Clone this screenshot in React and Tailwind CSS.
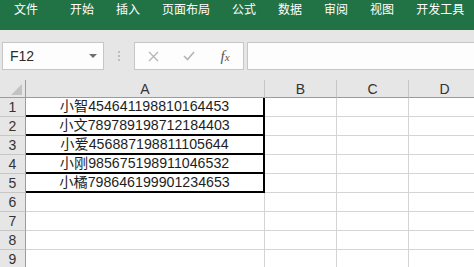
export default function App() {
  const tabs = ["开始", "插入", "页面布局", "公式", "数据", "审阅", "视图", "开发工具"];
  const data = [
    "小智454641198810164453",
    "小文789789198712184403",
    "小爱456887198811105644",
    "小刚985675198911046532",
    "小橘798646199901234653",
  ];
  const rows = [1, 2, 3, 4, 5, 6, 7, 8, 9];
  const cols = ["B", "C", "D"];
  return (
    <div className="w-[474px] h-[267px] overflow-hidden bg-white font-['Liberation_Sans','Noto_Sans_CJK_SC',sans-serif]">
      {/* Ribbon tabs */}
      <div className="h-[30px] bg-[#217346] flex items-start pt-[2px] pl-[14px] gap-[22px] text-white text-[12px] leading-[17px] whitespace-nowrap">
        <span className="mr-[10px]">文件</span>
        {tabs.map((t) => (
          <span key={t}>{t}</span>
        ))}
      </div>

      {/* Formula bar */}
      <div className="h-[50px] bg-[#e6e6e6] flex items-start pt-[12px] pl-[2px]">
        <div className="w-[102px] h-[28px] shrink-0 bg-[#fdfdfd] border border-[#c6c6c6] flex items-center justify-between pl-[7px] pr-[6px]">
          <span className="text-[14px] text-[#2b2b2b]">F12</span>
          <svg width="8" height="5" viewBox="0 0 8 5">
            <polygon points="0,0 8,0 4,4" fill="#6e6e6e" />
          </svg>
        </div>
        <div className="ml-[14px] shrink-0 h-[28px] flex flex-col justify-center gap-[2px]">
          <div className="w-[2px] h-[2px] bg-[#bdbdbd]" />
          <div className="w-[2px] h-[2px] bg-[#bdbdbd]" />
          <div className="w-[2px] h-[2px] bg-[#bdbdbd]" />
        </div>
        <div className="ml-[14px] w-[110px] h-[28px] shrink-0 bg-[#fdfdfd] border border-[#c6c6c6] flex items-center pl-[8px] gap-[16px]">
          <div className="w-[20px] flex justify-center">
            <svg width="11" height="11" viewBox="0 0 11 11">
              <path d="M1 1 L10 10 M10 1 L1 10" stroke="#b5b5b5" strokeWidth="1.3" fill="none" />
            </svg>
          </div>
          <div className="w-[20px] flex justify-center">
            <svg width="12" height="10" viewBox="0 0 12 10">
              <path d="M1 5 L4.5 8.5 L11 1" stroke="#b5b5b5" strokeWidth="1.6" fill="none" />
            </svg>
          </div>
          <div className="w-[20px] flex justify-center">
            <span className="font-['Liberation_Serif',serif] italic text-[15px] text-[#555] leading-none">
              f<span className="text-[11px]">x</span>
            </span>
          </div>
        </div>
        <div className="ml-[3px] w-[240px] h-[28px] shrink-0 bg-[#fdfdfd] border border-[#c6c6c6]" />
      </div>

      {/* Sheet */}
      <div className="grid grid-cols-[26px_239px_72px_72px_72px] bg-[#e6e6e6] w-[481px]">
        {/* header row */}
        <div className="h-[18px] border-r border-b border-[#9b9b9b] flex items-end justify-end pr-[3px] pb-[2px]">
          <svg width="11" height="11" viewBox="0 0 11 11">
            <polygon points="11,0 11,11 0,11" fill="#c3c3c3" />
          </svg>
        </div>
        <div className="h-[18px] border-r border-r-[#c6c6c6] border-b border-b-[#9b9b9b] flex items-center justify-center text-[14px] text-[#333] leading-none pt-[1px]">
          A
        </div>
        {cols.map((c) => (
          <div
            key={c}
            className="h-[18px] border-r border-r-[#c6c6c6] border-b border-b-[#9b9b9b] flex items-center justify-center text-[14px] text-[#333] leading-none pt-[1px]"
          >
            {c}
          </div>
        ))}
        {rows.map((r) => (
          <RowCells key={r} r={r} text={data[r - 1]} />
        ))}
      </div>
    </div>
  );
}

function RowCells({ r, text }) {
  const filled = r <= 5;
  return (
    <>
      <div className="h-[19px] bg-[#e6e6e6] border-r border-r-[#9b9b9b] border-b border-b-[#c6c6c6] flex items-center justify-center text-[14px] text-[#333] leading-none">
        {r}
      </div>
      {filled ? (
        <div className="h-[19px] bg-white border-r-2 border-b-2 border-black flex items-center justify-center text-[14.2px] text-[#1e1e1e] leading-none whitespace-nowrap">
          {text}
        </div>
      ) : (
        <div className="h-[19px] bg-white border-r border-b border-[#d4d4d4]" />
      )}
      <div className="h-[19px] bg-white border-r border-b border-[#d4d4d4]" />
      <div className="h-[19px] bg-white border-r border-b border-[#d4d4d4]" />
      <div className="h-[19px] bg-white border-r border-b border-[#d4d4d4]" />
    </>
  );
}
